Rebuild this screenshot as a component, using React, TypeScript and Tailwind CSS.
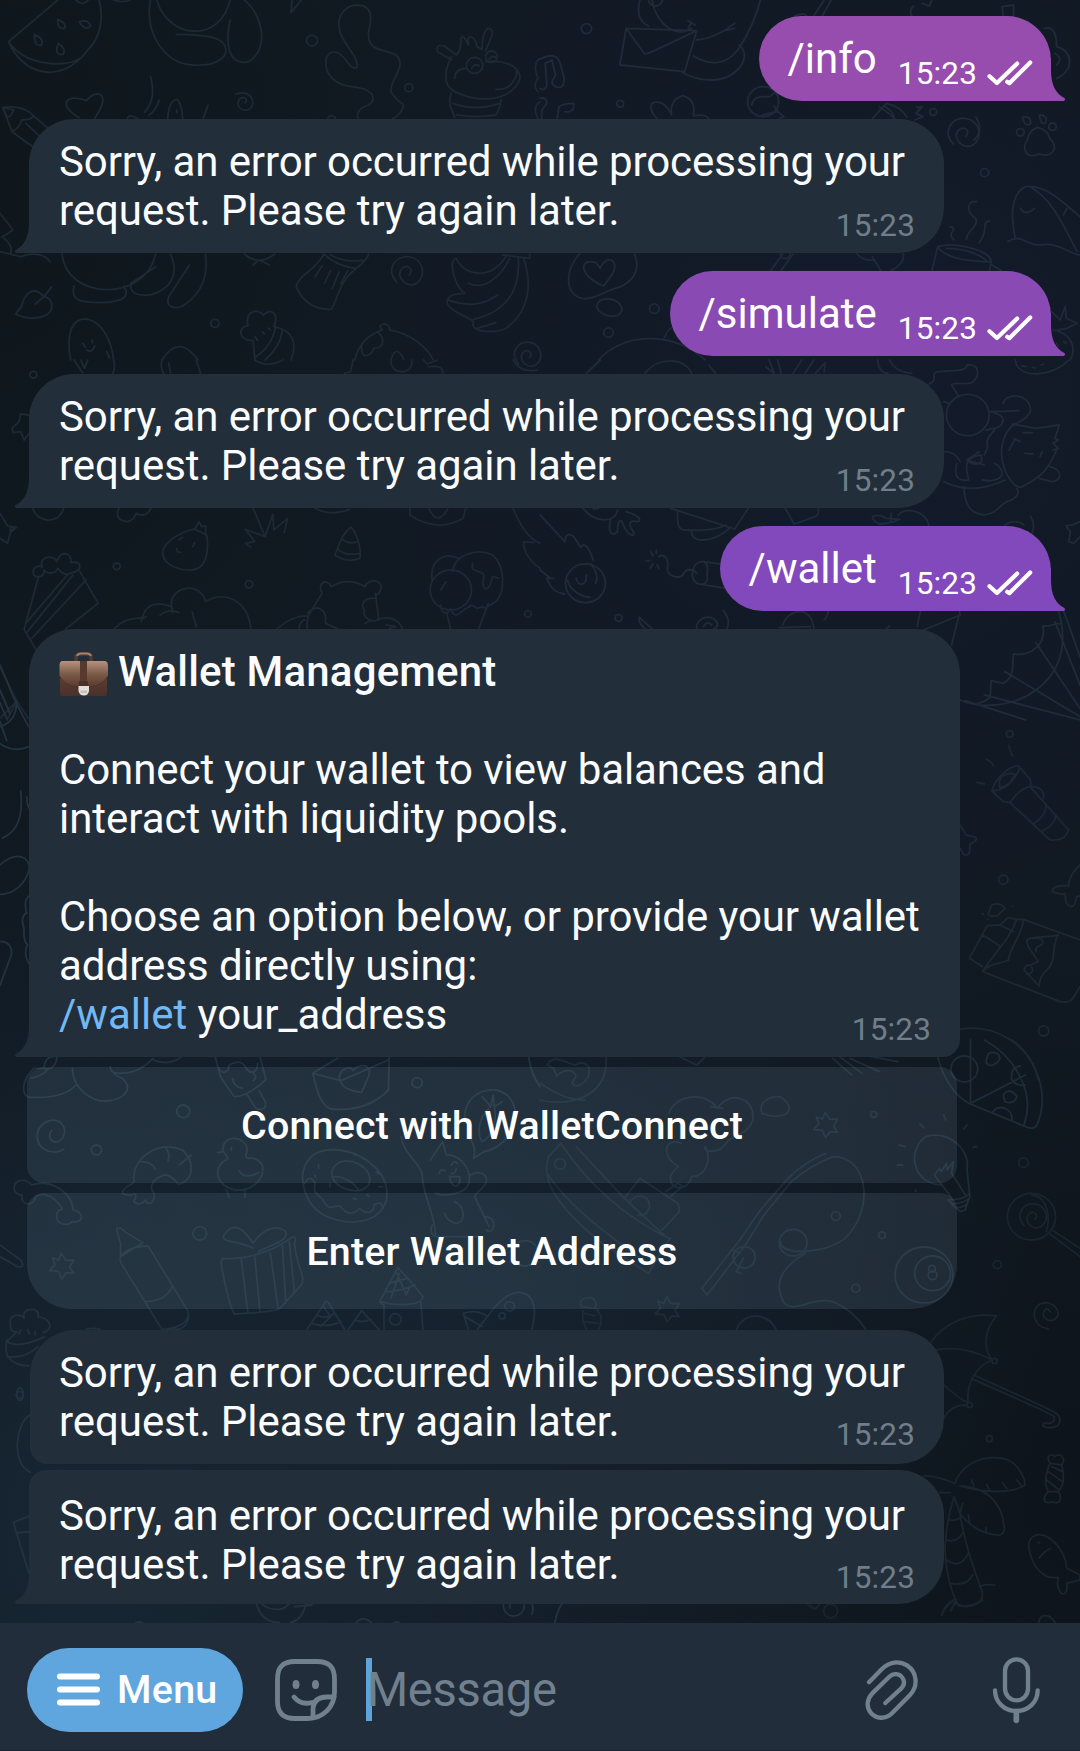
import React from "react";

type DoodleGroup = { transform: string; color: string; paths: string[] };

/** Circle as a path, so that every doodle is plain path data. */
const dot = (x: number, y: number, r = 12) =>
  `M${x - r} ${y}a${r} ${r} 0 1 0 ${2 * r} 0a${r} ${r} 0 1 0 ${-2 * r} 0`;

const spiral = (x: number, y: number, s = 1) =>
  `M${x - 28 * s} ${y + 32 * s}C${x - 62 * s} ${y - 6 * s} ${x - 32 * s} ${y - 48 * s} ${x + 6 * s} ${y - 45 * s}C${x + 48 * s} ${y - 40 * s} ${x + 62 * s} ${y + 12 * s} ${x + 28 * s} ${y + 36 * s}C${x - 2 * s} ${y + 52 * s} ${x - 34 * s} ${y + 10 * s} ${x - 12 * s} ${y - 10 * s}C${x + 4 * s} ${y - 24 * s} ${x + 24 * s} ${y - 6 * s} ${x + 8 * s} ${y + 10 * s}`;

const star = (x: number, y: number) =>
  `M${x - 2} ${y - 38}L${x + 11} ${y - 17}L${x + 34} ${y - 18}L${x + 22} ${y + 4}L${x + 34} ${y + 22}L${x + 13} ${y + 20}L${x - 1} ${y + 38}L${x - 10} ${y + 16}L${x - 36} ${y + 14}L${x - 20} ${y - 4}L${x - 28} ${y - 24}L${x - 10} ${y - 18}Z`;

const doodles: DoodleGroup[] = [
  {
    transform: "scale(.3444 .3333)",
    color: "#1d2934",
    paths: [
      "M168 0L25 125C60 215 170 265 255 150C295 110 300 50 288 0M25 125C70 195 190 210 240 170M220 0Q240 20 256 0M330 0Q355 10 378 0",
      "M168 58Q200 75 185 86Q165 86 168 58M230 66Q255 55 263 78Q250 95 230 66M100 104Q128 115 122 134Q100 145 100 104M170 130Q195 150 182 164Q155 165 170 130",
      "M437 0C420 90 470 190 560 195C640 200 660 165 655 145C650 110 590 103 512 103M455 0C490 120 640 130 668 0M668 60C640 210 720 190 730 180C785 130 755 40 710 0M845 38L875 0M845 38L848 0",
      "M1035 15C1000 18 975 50 987 95C997 130 1050 185 1035 203C1010 212 1000 145 960 158C930 180 945 250 1020 260C1080 265 1100 295 1070 315Q1030 330 1040 356M1035 15C1080 15 1082 50 1070 95C1065 160 1120 145 1150 165C1185 200 1130 240 1135 275Q1150 300 1170 312Q1175 335 1140 356",
      dot(906, 122, 16), dot(1187, 263), dot(963, 358, 11), dot(624, 970),
      "M1310 170C1270 260 1310 280 1380 295C1460 305 1500 270 1510 235C1510 195 1460 180 1410 185M1312 180L1270 155Q1265 130 1290 138L1325 165Q1340 150 1338 115Q1345 100 1360 135Q1355 100 1375 115Q1385 130 1385 140L1400 148Q1400 95 1418 85Q1438 90 1425 115L1410 152M1320 235Q1320 208 1352 205M1440 268Q1480 270 1492 240Q1505 225 1498 205M1310 280C1300 310 1310 325 1320 352M1455 300Q1450 330 1440 345M1315 310Q1380 335 1450 310M1325 345Q1380 355 1440 345",
      dot(1378, 196, 24), dot(1427, 170, 17), "M1370 205Q1378 188 1392 198M1420 178Q1428 165 1438 172",
      "M1568 175Q1545 190 1562 235Q1545 260 1562 275M1568 305Q1545 320 1562 356",
      "M230 353C160 310 200 280 250 302C280 265 320 280 285 338L275 356",
      "M8 322L35 395L95 440M8 322Q70 315 98 348L140 385M35 395Q60 380 62 360Q90 360 98 348M75 370L115 408M8 322L40 330Q30 355 20 350Z",
      "M437 230Q455 295 420 337M462 300Q455 330 432 346M487 356Q490 300 515 298Q530 320 530 356M513 330V338M604 315L590 356M370 355Q375 340 400 356",
      "M685 282C740 265 745 325 718 330C685 335 685 295 705 292Q722 295 712 308",
      "M180 760C190 900 420 910 452 762M215 858C205 900 230 908 290 908C370 905 375 885 360 858M380 850C375 880 400 890 440 884C500 865 520 820 495 762M380 850L452 800M550 795L490 890C480 920 505 930 530 918C590 880 605 820 596 762",
      "M150 860L128 890C90 850 70 890 62 920L45 942C90 965 155 955 150 915Q150 895 128 890L102 912M0 755Q40 765 60 770Q120 750 145 785M0 640L38 690L5 712M12 715Q40 740 30 760",
      "M710 762Q750 800 798 762M735 795L752 780L782 795",
      "M940 762C920 810 870 820 860 860C875 900 910 930 962 928C985 890 980 850 1035 805Q1070 775 1070 762M940 762Q980 800 1035 805M960 765Q1000 790 1060 780M935 798L915 830M960 812L942 850M985 815L965 865M1010 812L990 850",
      spiral(1180, 815),
      "M1470 768C1420 850 1340 820 1325 775C1300 780 1320 860 1350 880C1290 880 1290 910 1310 925C1340 950 1370 955 1375 965C1360 1000 1440 1000 1470 985C1540 930 1545 850 1520 775M1505 775C1510 850 1490 930 1375 958M1300 900C1370 925 1410 910 1445 885M1360 850C1400 870 1450 840 1480 775M1385 985Q1420 975 1440 968M1460 765L1538 775V762",
      "M205 1080C190 1000 210 955 250 957C300 965 325 1030 330 1080M240 1030L248 1042M268 1020V1028M252 1050Q268 1060 275 1038M310 1055L318 1075M470 1080Q520 1000 575 1080",
      "M740 1080L735 1022C690 1020 690 980 720 978C710 930 750 925 765 945C790 920 810 945 795 980C850 990 865 1030 845 1080M740 1072Q790 1040 800 980M770 1080Q815 1040 820 990M740 1010L748 1022M762 995L768 1002M780 985L784 990",
      "M1030 1080C1045 1020 1080 1000 1110 990Q1095 975 1115 972Q1135 975 1130 990C1190 1000 1240 1040 1258 1080M1050 1040C1045 1080 1080 1070 1085 1045C1120 1045 1115 1010 1098 998M1135 1080Q1150 1030 1172 1078",
      spiral(1530, 1065, 0.85),
    ],
  },
  {
    transform: "translate(540 0) scale(.3444 .3333)",
    color: "#202a3a",
    paths: [
      dot(135, 86, 15), dot(233, 311, 10), dot(1142, 336, 10), dot(1291, 518), dot(332, 926, 14), dot(199, 998, 14),
      "M250 85L455 92L420 215L232 195ZM250 85L302 160Q310 162 320 158L455 92M290 0Q275 60 315 78M325 0C340 80 400 115 440 85M430 62L450 75M438 70L430 85M455 120Q510 115 565 70M565 85L535 92M640 0C620 80 590 125 578 145C540 200 490 195 445 168M578 135C620 170 570 240 500 240Q450 240 410 215",
      dot(335, -2, 20),
      "M740 48Q770 35 775 50M795 48L825 0M820 48L845 0M1080 48Q1070 30 1085 18M1110 10L1130 18L1138 0M1345 48L1342 20L1375 15V48",
      "M1465 85Q1500 75 1500 140C1545 150 1555 210 1500 235M1495 160Q1520 175 1500 195",
      "M0 178Q50 150 60 195L70 235Q70 270 45 260Q25 250 45 228L35 180L15 190L20 255Q15 275 0 265M0 295Q20 290 20 310L5 330V356M50 356L55 320Q70 310 98 310Q100 340 72 335",
      "M340 356Q315 330 325 310Q360 295 382 345Q375 300 415 287Q455 300 445 348Q480 340 490 356",
      dot(648, 305, 45), "M615 315C620 285 650 290 668 290Q675 280 688 275M645 345L690 335L680 318M690 335L708 350L695 356",
      "M965 356L1005 310Q1050 320 1065 352M985 320Q1015 340 1030 356M1000 318Q1025 335 1028 350M1095 320Q1090 325 1110 320L1092 340L1112 350L1088 360",
      spiral(1228, 400),
      "M1265 350Q1290 390 1260 420",
      "M1445 382Q1475 390 1480 415C1510 445 1485 475 1450 462C1405 480 1400 440 1415 420Q1420 390 1445 382",
      dot(1395, 397, 11), dot(1488, 380, 11), "M1400 352Q1425 345 1425 370Q1410 385 1400 352M1450 345Q1475 345 1468 368Q1455 380 1450 345",
      "M1358 725C1400 700 1410 735 1450 735C1510 725 1540 765 1568 765M1380 715C1365 640 1370 580 1410 560C1470 550 1530 620 1568 650M1425 562C1490 600 1520 680 1560 755M1395 625Q1410 650 1435 625M1530 625L1520 645",
      "M1268 605C1235 600 1240 640 1265 655C1275 680 1240 690 1238 718M1305 663C1280 665 1305 690 1275 728M1190 680Q1208 682 1195 700Q1190 710 1202 720M1155 740C1200 725 1310 750 1310 785C1260 785 1180 780 1155 740M1155 740L1138 812M1310 785L1305 812M1180 745Q1250 745 1295 780M1312 795L1340 812",
      "M115 762C70 810 70 890 130 897C180 890 190 870 235 860C290 830 285 790 275 762M185 858C115 830 110 775 160 787Q165 790 175 805C190 760 240 780 205 830Z",
      "M165 922C165 880 240 895 238 930C230 960 175 950 165 922M705 762L670 812M735 762L700 812M920 762Q940 785 970 780M965 770L990 812M1055 762Q1060 790 1020 812",
      dot(712, 762, 14),
      "M360 1015Q370 985 395 975M170 1080C240 1000 380 990 480 1080M1485 935L1510 960L1525 920L1528 955L1560 970L1530 985L1505 990M1490 990C1540 1000 1560 1040 1540 1080M1500 1030L1505 1038M1520 1025L1528 1030",
    ],
  },
  {
    transform: "translate(0 360) scale(.3444 .3333)",
    color: "#1d2934",
    paths: [
      dot(97, 44, 10), dot(339, 619, 10), dot(723, 673, 11), dot(1533, 762, 10),
      "M215 0L240 38M235 0L245 25L255 0M330 0Q335 20 328 40M470 0Q465 25 475 40M490 10L495 38M570 0L582 40M740 0Q775 25 822 0M1025 0L1018 35L1000 40M1135 0Q1135 35 1170 35Q1200 30 1195 0M1230 0L1240 12L1270 0M1245 20Q1290 15 1285 40M1490 0Q1510 40 1560 30",
      "M85 165L60 162L55 185L35 205L38 218L60 215L70 240L85 220",
      "M95 445C110 490 170 495 185 445M345 445Q330 480 370 485Q390 480 395 460Q425 475 438 445M0 460L22 498L48 502L30 518L22 550L0 535M30 500L45 503L30 512Z",
      "M565 507C530 515 480 540 472 575C470 620 540 640 575 625C605 610 605 550 600 525L580 515L565 507L578 485L585 500L597 498V525M520 540L530 532M565 548L560 560M513 565Q512 578 525 577",
      "M735 445L770 530L792 462L795 510L835 475L825 518M770 530L712 508L740 545L712 550L728 562",
      "M915 445Q960 470 1015 448M1190 445V465Q1270 520 1345 475L1352 445M1245 445Q1270 500 1300 448",
      "M1020 502C990 520 985 560 972 585Q1005 610 1045 595C1050 560 1035 520 1020 502M992 535Q1010 555 1038 545M980 565Q1000 590 1045 580",
      "M98 645C90 620 115 615 122 622C110 585 160 585 165 605C180 560 215 590 205 608C245 600 235 635 210 638C190 650 175 635 168 625C155 650 130 635 128 630C130 650 110 655 98 645M112 650L70 808L105 870M230 632L285 730L190 808M195 645L75 790M212 645L80 815M250 660L92 835",
      "M332 806Q365 770 415 775M410 785C420 735 450 720 498 740C490 680 580 660 597 725C650 690 720 720 728 806M415 775L425 770M465 765Q490 745 520 758M558 755L570 800M500 742V758",
      "M805 806Q850 765 895 768M935 700C920 665 950 655 962 680C990 660 1030 660 1060 680C1070 650 1125 660 1100 700Q1095 708 1090 700L1100 780M935 700L895 768C890 790 892 800 892 806M892 760C920 730 950 745 945 790L980 806M868 806Q870 785 885 780M1090 715C1060 710 1045 735 1058 750C1050 775 1085 790 1095 780C1130 765 1160 780 1168 806M1060 790L1080 780M1120 795L1150 800L1130 806",
      dot(1309, 690, 60),
      "M1255 665C1245 600 1290 575 1330 595M1315 635C1320 580 1390 565 1430 585C1470 620 1465 700 1440 725C1420 735 1410 750 1400 740L1385 745L1370 735L1360 740M1280 690L1295 665M1372 610C1365 640 1400 630 1405 645C1395 700 1420 690 1425 670L1430 650L1448 655M1280 735C1280 770 1305 760 1308 745C1325 790 1340 745 1365 740M1298 762L1308 806M1418 730L1390 806",
      "M1490 445C1510 500 1540 540 1568 550M1550 548L1520 545C1520 580 1545 610 1568 625",
      "M0 920L48 1022L82 1075M0 990L30 1060M0 1075L50 1022L20 1080",
    ],
  },
  {
    transform: "translate(540 360) scale(.3444 .3333)",
    color: "#202b3a",
    paths: [
      dot(228, 774, 10), dot(132, 670, 58), dot(1242, 165, 62),
      "M135 40L175 0M305 40C340 -10 420 -10 440 40M490 15L510 40M655 20L680 40L665 0M700 40L690 0M735 40L760 0M770 40L795 0M800 40L828 8L825 35M980 0Q985 40 1010 40M1015 0Q1030 35 1080 40M1380 0Q1385 40 1440 42Q1500 38 1535 0M1400 18L1412 20M1430 22L1438 24M1455 15L1462 12",
      "M1130 72C1160 60 1130 40 1155 35C1200 30 1240 35 1240 15C1275 10 1280 45 1255 68C1220 75 1200 65 1195 75L1215 108",
      "M1172 125L1188 130M1175 275Q1205 275 1220 305M1172 365C1240 400 1300 385 1350 360M1305 155Q1350 155 1390 152M1345 130C1350 100 1420 95 1425 150C1420 175 1390 185 1372 198M1305 155Q1350 165 1345 185M1295 210L1320 205Q1345 200 1343 180M1320 210Q1290 240 1300 260L1290 285",
      "M1380 190C1340 220 1330 280 1350 330C1370 380 1395 385 1400 380C1460 350 1480 320 1500 270M1370 192L1440 205L1508 195L1495 235L1505 240L1490 250L1505 265L1490 270M1375 235L1395 245M1378 240L1362 270M1402 218H1430M1408 280L1432 282M1458 275L1452 290M1480 320C1520 330 1515 365 1485 365L1450 355M1210 310C1200 350 1215 365 1245 360C1230 310 1240 290 1280 285C1290 310 1270 320 1245 305M1275 275L1240 300L1290 315M1285 360C1350 370 1355 330 1320 310M1230 380C1235 440 1250 460 1290 465C1340 455 1330 430 1370 420Q1395 405 1385 385",
      "M0 465L72 545C75 520 85 520 98 530L118 562C130 540 145 570 155 602M0 630L30 655M40 655H20C30 685 50 700 72 702M105 655C110 680 135 680 135 645M80 660C85 690 120 710 145 712M148 612Q172 640 162 670",
      "M125 445C160 490 220 490 225 450M155 447L170 445M205 480C195 520 210 530 225 515C225 480 235 475 240 490C260 540 285 530 265 505C255 485 265 480 285 485C300 475 270 460 250 455",
      "M380 445L565 507L605 445M400 455Q395 510 420 510Q500 515 540 495M440 515C440 550 500 550 550 505M712 445L738 492L800 470Q812 460 808 445",
      "M345 590C360 580 375 595 370 625C370 655 410 655 415 645C420 625 445 625 455 640M475 605C440 600 430 660 460 672Q490 680 485 640Q490 610 475 605L540 615M460 672L540 685M322 575L328 588M338 570V580M308 602H318M320 625L328 612M340 615L345 625",
      "M325 806L288 772Q285 790 305 806M455 806C450 775 500 755 515 790Q515 806 505 806M475 800Q485 780 498 795M532 752Q555 780 543 806M695 803L785 800M705 795C720 745 790 735 795 806M825 780Q835 770 838 752",
      "M965 470Q985 460 1005 475L1045 478Q1020 490 985 492Q965 480 965 470M1020 460L1018 482M1040 465C1060 440 1120 450 1130 498M1350 495Q1380 475 1405 495M1425 470Q1440 495 1428 520M1568 485L1545 495L1528 498L1540 515L1535 545L1550 550L1568 530",
      "M1105 752L1095 800M1220 752L1195 855M1110 812L1220 765M1005 806L1015 798",
      "M1505 752C1540 870 1500 960 1410 1010C1350 1040 1270 1045 1220 1020M1520 752L1568 890M1495 785L1568 975M1440 848L1568 1045M1350 935L1568 1070M1290 1005L1568 1080M1235 1022L1410 1080M1515 790C1490 790 1485 800 1460 798C1470 850 1430 890 1375 882C1370 920 1380 950 1345 970L1310 962C1305 1000 1320 1020 1270 1030",
    ],
  },
  {
    transform: "translate(0 1040) scale(.3444 .3333)",
    color: "#20323e",
    paths: [
      dot(532, 214, 19), dot(280, 330, 15), dot(580, 580, 20), dot(1211, 128, 15), dot(1148, 838, 17), dot(57, 1065, 10), dot(1480, 799, 14), dot(1458, 828, 9),
      "M155 50Q130 50 128 85C150 95 165 70 165 50M98 85C60 125 60 170 90 172C160 175 200 160 220 135M98 85L128 85M90 115Q130 105 140 85M210 85C210 140 260 185 310 183C370 178 385 140 355 115C330 105 320 90 320 80M330 98C380 105 410 90 445 55M445 60C480 75 510 65 528 50",
      "M625 50L640 110L680 170Q720 170 772 118L755 50M632 78C645 110 665 95 665 75C685 65 700 60 712 80C730 110 748 95 748 70M675 115C675 130 690 145 705 145M735 100Q750 110 735 122M718 165L740 200M752 152L770 185Q775 205 760 208Q745 210 740 200",
      "M908 100L980 55M908 100C920 150 930 195 960 207C1040 215 1090 190 1128 150L1130 50M908 100L990 122L1128 60M1050 157C980 150 970 100 1005 85Q1020 80 1025 92C1040 70 1080 70 1072 105Z",
      "M185 328C160 345 110 335 108 290C108 250 150 230 175 247C200 270 185 310 155 305Q135 290 150 272",
      "M355 460C360 430 395 440 388 415C390 350 460 300 530 330C570 370 560 420 520 433C510 430 505 405 478 405C445 415 430 440 447 460C450 490 430 500 422 480Q410 500 388 485Q400 465 390 462Q375 470 355 460M410 365Q440 365 452 388M480 322Q495 340 488 362M520 375L555 345",
      "M632 338L648 335C640 280 715 285 718 330C715 345 710 350 720 355M650 335C655 350 665 352 660 358C625 370 615 430 680 450C730 455 770 420 762 375Q745 350 720 355M695 393Q710 420 752 398M658 450L665 472M710 450L712 472M672 322V330",
      "M900 355C860 400 880 490 940 525C1010 560 1100 555 1122 480C1135 400 1060 340 985 330C940 325 910 340 900 355M963 400C970 350 1040 350 1070 400C1085 440 1050 460 1015 450C980 440 965 425 963 400M970 410C1000 410 1030 430 1040 450M885 430Q900 400 915 430C905 470 935 465 940 485C960 520 975 490 990 500C1010 530 1030 520 1045 505C1070 530 1090 510 1085 495Q1110 480 1112 505M925 375V385M1030 340V345M915 405V412M1092 395L1100 402M1100 440H1110M1025 475L1035 478M958 430V440M1065 465L1072 468",
      "M1350 240C1345 180 1390 145 1440 150C1500 165 1510 230 1480 280C1455 320 1430 330 1405 335L1375 355Q1385 320 1360 290M1400 170L1425 200L1432 165L1435 200L1458 185M1425 200C1380 240 1390 290 1400 305C1430 290 1445 240 1435 200",
      "M1165 290C1170 340 1220 370 1225 400C1230 480 1260 510 1265 585M1250 360L1285 305C1295 330 1290 350 1305 345C1340 350 1370 390 1362 430C1350 465 1290 470 1265 460M1365 405C1400 385 1430 410 1400 445Q1385 455 1378 470L1420 560M1305 410C1310 450 1340 445 1335 410ZM1275 400Q1278 385 1292 392M1310 375Q1318 360 1328 370M1310 400Q1322 405 1325 385M1320 485C1350 500 1355 545 1325 550Q1300 545 1290 520M1405 530Q1440 530 1432 565Q1425 580 1412 570M1255 555Q1245 580 1265 590H1400",
      "M42 452C35 415 75 415 92 435C150 415 210 460 212 510C245 515 245 550 210 545C195 560 160 555 165 520C175 500 180 515 180 505C150 455 110 455 100 478C95 500 55 495 65 465Q50 465 42 452",
      star(180, 678),
      "M340 565Q350 560 362 575L415 608L350 650V610L340 575ZM350 650Q370 620 430 618L545 812C555 850 530 870 510 868H470L358 680Q345 665 350 650M420 785Q480 785 500 740M480 868Q540 860 548 825",
      "M735 625C690 600 640 610 650 585C680 540 710 570 735 610C760 570 800 550 830 575C840 605 780 615 750 635M645 655C700 660 790 640 850 590Q862 590 855 610C860 680 890 710 875 735L810 808C760 820 710 820 680 822C660 780 650 720 642 670ZM700 655L720 820M740 650L755 818M785 640L808 808M820 618L830 790M840 605L855 760",
      "M892 868L945 785Q950 782 955 790L1000 868M920 825Q945 840 972 820M905 850Q950 865 990 845M940 800L960 830L930 860M1012 868L1050 812L1100 868M1030 840Q1055 850 1078 838M1115 868V795Q1100 790 1105 780L1155 683Q1190 720 1228 770Q1225 785 1205 790Q1150 800 1105 785M1222 788L1228 868M1130 730Q1155 720 1185 715M1118 755Q1160 755 1205 735M1150 695L1180 765L1190 740M1160 700L1135 775",
      "M1345 820C1370 810 1400 815 1415 830L1385 870M1345 820L1360 868M1350 830L1400 860M1415 830C1450 780 1480 755 1510 757C1560 765 1555 820 1545 868",
      "M30 852C25 820 65 820 70 835C60 800 120 800 110 830C150 835 155 870 125 878M30 852Q30 880 50 875M20 900C10 950 30 975 85 978M20 905C50 925 100 905 130 890M20 950C60 955 90 940 110 920M50 875L20 905M60 870L55 882M80 870L85 882M102 875V885M0 615L60 660Q75 685 50 680L0 650M250 868Q270 862 290 868",
      dot(1525, 640, 38),
      "M1535 50Q1540 100 1568 140",
    ],
  },
  {
    transform: "translate(540 1040) scale(.3444 .3333)",
    color: "#1d2c38",
    paths: [
      dot(1232, 87, 39), dot(969, 223, 9), dot(859, 528, 13), dot(993, 586, 10), dot(917, 745, 12), dot(593, 652, 32), dot(58, 372, 16), dot(735, 608, 40),
      "M20 75Q35 50 60 60L100 75C130 60 150 75 140 110C120 145 100 140 92 130C105 110 110 105 95 95Q70 85 48 108L40 85ZM0 180C70 200 200 180 192 50M0 130C60 170 90 180 130 180M405 50L455 75L480 50M850 55L905 105M870 50Q910 80 935 100M900 55L985 95M960 50L1040 65",
      "M375 220C390 165 480 150 515 205C550 150 625 170 618 240C600 290 570 275 540 310C520 345 470 335 480 320C500 360 480 410 440 410C430 460 370 450 380 405C395 380 405 380 400 378C350 350 360 290 410 310M495 200L530 205M645 220C630 180 680 165 700 172C740 200 720 225 705 225Q680 235 645 220",
      star(830, 255), star(370, 808),
      "M25 350C0 420 50 500 180 610L315 700L370 605L380 595M60 310C130 420 240 530 375 595M20 400C90 510 220 600 310 670M25 350L60 310M105 320L245 475L290 415L400 490Q410 510 400 520L355 570M245 475L360 585M260 490C270 460 320 460 318 500Q310 530 285 525M365 455L400 430L415 440L380 468",
      "M470 745L580 600L640 510L720 415Q770 365 830 340M485 765L600 610L650 525L730 425Q780 380 850 350C960 350 970 520 880 600C820 640 700 650 698 605M470 745L485 765M770 640C690 690 680 740 710 790C740 820 790 770 850 785Q910 810 945 868M580 640L560 630M590 655L570 695L585 700M570 870C590 815 660 815 685 868",
      dot(1115, 705, 84), dot(1140, 700, 52), dot(1138, 686, 10), dot(1140, 706, 13),
      "M120 800Q110 775 145 772Q170 780 160 805Q190 830 170 868M125 812Q120 840 135 868M130 820L160 828M125 845L170 850M170 808L120 800",
      "M1155 50C1170 120 1210 170 1245 190L1415 262Q1440 270 1445 250C1480 160 1440 50 1370 0M1250 0V190L1410 105M1290 0C1380 50 1440 160 1405 255M1300 45Q1310 30 1330 42Q1345 60 1315 75Q1300 80 1295 65ZM1345 165Q1365 140 1385 170Q1375 195 1350 185ZM1315 215C1330 190 1375 205 1370 240M1395 78Q1365 80 1370 120Q1385 140 1408 135",
      "M1165 435C1080 430 1065 330 1120 290C1190 270 1250 330 1240 390L1248 470Q1240 490 1235 510L1220 515L1185 480M1145 405L1160 385L1165 395L1180 370L1182 390L1200 365L1195 400L1235 465M1145 405L1200 480M1185 480Q1230 480 1248 460M1195 492Q1230 490 1246 475M1205 503Q1225 505 1242 490M1103 253L1115 263M1172 225L1178 240M1240 255L1230 267M1042 315L1060 320M1038 375H1052M1258 322L1268 320M1090 455L1092 450",
    ],
  },
  {
    transform: "translate(540 1040) scale(.3444 .3333)",
    color: "#1a242d",
    paths: [
      dot(1404, 368, 14), dot(1328, 674), dot(1427, 530, 70), spiral(1430, 530, 0.85),
      "M1427 465C1480 470 1480 545 1470 575M1490 572L1568 625M1478 580L1568 650",
    ],
  },
  {
    transform: "translate(900 640) scale(.3333)",
    color: "#1d2835",
    paths: [
      dot(329, 282, 10), dot(310, 719, 14), dot(431, 1173, 15),
      "M326 316L337 348M260 358Q275 365 280 376M229 427L253 432M276 453C285 415 325 380 355 377L390 418Q395 430 390 440C365 445 345 465 330 488L310 485L276 453M300 443C290 410 320 395 345 403C330 430 320 440 300 443M330 488L450 600Q495 605 506 570L390 440M395 440C425 440 435 460 430 475M403 550Q440 525 438 492M427 573Q465 555 468 525M276 453C320 450 345 420 360 382",
      "M180 555L198 585L228 592Q235 602 210 612L208 640Q200 650 190 642L180 625M540 675Q510 700 505 738C480 735 455 740 457 755Q480 765 495 760C495 800 515 810 525 790L530 770L540 768",
      "M275 795Q300 785 315 805L295 825Q270 835 265 822ZM262 857L208 955L248 980M262 857L300 855L325 832L350 838M248 885L300 918M300 855L340 875M350 838C330 900 280 940 248 995C270 965 300 975 325 960C330 920 370 880 370 838L540 900M370 838H350M248 995L480 1085Q505 1090 515 1080L540 1040M380 900C400 885 440 895 475 885C450 920 475 960 440 990C420 1010 420 1020 417 1038L372 990Q375 975 392 975L415 965L385 920ZM398 895C435 890 430 910 425 915Q405 920 408 935M395 980Q405 1000 380 1003M247 822H250M337 798H338M262 838H264",
      "M180 1168C280 1150 390 1210 415 1320",
    ],
  },
  {
    transform: "translate(900 1300) scale(.3333)",
    color: "#1a252e",
    paths: [
      dot(284, 183, 8), dot(209, 315, 8), dot(268, 416, 9),
      "M445 87C400 80 390 30 420 12C460 -5 490 40 465 58C440 70 420 45 435 30Q445 22 450 35",
      "M92 128C130 70 210 35 290 48C250 90 250 150 277 180C220 150 160 140 110 150M277 180C220 200 200 260 204 308C180 300 150 270 132 255M132 355Q150 315 200 315M220 238L415 325L460 348Q468 365 450 370Q430 365 428 378Q455 390 475 375Q490 350 460 335L420 315L222 225",
      "M165 550C190 470 310 450 350 500Q375 530 375 555C340 580 250 580 180 558M70 528C110 525 150 545 165 550M118 578H150M180 558C250 560 310 600 313 690Q305 710 290 705C240 700 200 670 180 640M215 540L222 558M260 553L268 570M308 548L320 565M350 540L365 558M188 610L180 640M205 645L208 665M258 682V698M162 590L180 640C190 710 210 780 245 870Q260 920 175 918C140 850 135 770 135 740Q140 660 162 590M145 660Q170 665 185 650M138 720Q170 730 188 700M140 780Q180 810 205 760M150 850Q200 860 218 825M238 860Q260 850 285 856M165 898Q135 910 125 945M168 900L152 932",
      "M450 490C435 465 455 460 465 470C480 455 500 475 485 495C495 530 490 560 475 575C490 600 475 615 460 605C430 615 425 595 445 575C430 550 440 510 450 490L485 495M445 575H475M455 500L488 515M445 515L488 545M440 540L478 570",
      "M390 760C375 710 410 695 440 710C480 730 500 780 500 805L540 825V840L500 850C505 880 490 890 480 875C465 850 475 840 475 832C430 840 400 800 390 760M417 775Q430 755 452 745M415 728H420M418 968C415 940 450 940 465 968",
    ],
  },
  {
    transform: "translate(0 640) scale(.3333 .628)",
    color: "#22333f",
    paths: [
      "M0 40L48 100L86 138M0 80L30 118M0 138Q50 130 50 98M0 100L20 125M0 165Q40 180 86 170M0 130L20 160M62 240Q75 300 8 315M80 250Q82 265 88 268M0 358C50 335 90 345 88 365C75 390 40 405 0 405M86 408Q70 415 80 435Q60 440 72 460Q70 480 82 485Q70 500 86 515M0 480Q35 480 35 500L0 550M88 1235C50 1245 30 1310 90 1325M88 1395L40 1405L86 1485M48 1422L88 1420",
      dot(60, 1201, 10),
    ],
  },
  {
    transform: "translate(0 1600) scale(.3827 .3333)",
    color: "#223440",
    paths: [
      "M670 12C680 50 700 68 730 68M685 12Q700 30 730 28Q745 25 755 12M800 12C790 50 780 60 760 68M770 20L815 15M930 68Q950 45 970 68M1028 70L1035 65L1045 70M1315 12C1315 60 1370 60 1370 15M1332 12V25M1390 12Q1395 30 1390 42M1450 68Q1455 35 1468 12",
      "M355 68Q365 64 372 68",
    ],
  },
  {
    transform: "translate(800 1600) scale(.3333)",
    color: "#19242d",
    paths: [dot(92, 33, 21), "M22 12Q45 40 58 12M30 12L45 28M425 45Q440 10 470 0M452 32Q460 15 470 8Q500 35 548 0M715 68C720 40 750 40 765 68"],
  },
];

function Wallpaper() {
  return (
    <svg
      className="pointer-events-none absolute inset-0"
      width="1080"
      height="1751"
      viewBox="0 0 1080 1751"
      fill="none"
      strokeWidth="1.8"
      strokeLinecap="round"
      strokeLinejoin="round"
      aria-hidden="true"
    >
      {doodles.map((g, i) => (
        <g key={i} transform={g.transform} stroke={g.color}>
          {g.paths.map((d, j) => (
            <path key={j} d={d} vectorEffect="non-scaling-stroke" />
          ))}
        </g>
      ))}
    </svg>
  );
}

function Tail({ side, className }: { side: "left" | "right"; className: string }) {
  return (
    <svg
      className={`absolute bottom-0 ${side === "left" ? "-left-[14px]" : "-right-[14px] -scale-x-100"} ${className}`}
      width="16"
      height="45"
      viewBox="0 0 16 45"
      fill="currentColor"
    >
      <path d="M14 2H16V45H1Q-.8 43.500 .6 42C9 38 14 29 14 14Z" />
    </svg>
  );
}

function Checks() {
  return (
    <svg width="46" height="26" viewBox="0 0 46 26" fill="none" stroke="currentColor" strokeWidth="4.200" strokeLinecap="round" strokeLinejoin="round">
      <path d="M2.500 16.200L9.900 23L30.200 3.600M20.200 21.800L22.400 23.200L43.200 2.500" />
    </svg>
  );
}

function Outgoing({ text, bubble, tail }: { text: string; bubble: string; tail: string }) {
  return (
    <div className={`relative flex h-[85px] items-start self-end rounded-l-[43px] rounded-tr-[45px] pt-[18px] pr-[18px] pl-[29px] text-white ${bubble}`}>
      <span>{text}</span>
      <span className="mt-[21px] ml-[21px] text-[31.5px] leading-[37px] tracking-[0.15px]">15:23</span>
      <span className="mt-[26px] ml-[10px]">
        <Checks />
      </span>
      <Tail side="right" className={tail} />
    </div>
  );
}

type IncomingProps = {
  children: React.ReactNode;
  className: string;
  tail?: boolean;
  timeOffset?: string;
};

function Incoming({ children, className, tail = true, timeOffset = "-mb-[9px]" }: IncomingProps) {
  return (
    <div className={`relative grid bg-[#222e39] pr-[29px] text-[#fafcff] ${className}`}>
      <div className="whitespace-nowrap [grid-area:1/1]">{children}</div>
      <span className={`self-end justify-self-end text-[31.5px] leading-[37px] tracking-[0.15px] text-[#707e8b] [grid-area:1/1] ${timeOffset}`}>15:23</span>
      {tail && <Tail side="left" className="text-[#222e39]" />}
    </div>
  );
}

function ErrorText() {
  return (
    <p>
      <span className="tracking-[-0.09px]">Sorry, an error occurred while processing your</span>
      <br />
      <span className="tracking-[-0.05px]">request. Please try again later.</span>
    </p>
  );
}

function Briefcase() {
  return (
    <svg className="mt-[6px] mr-[10px] shrink-0" width="49" height="45" viewBox="0 0 49 45">
      <defs>
        <linearGradient id="leather" x1="0" y1="0" x2="0" y2="1">
          <stop offset="0" stopColor="#b5937e" />
          <stop offset=".5" stopColor="#7c5a48" />
          <stop offset="1" stopColor="#573a2e" />
        </linearGradient>
        <linearGradient id="base" x1="0" y1="0" x2="0" y2="1">
          <stop offset="0" stopColor="#6c4a3a" />
          <stop offset="1" stopColor="#49302a" />
        </linearGradient>
      </defs>
      <path d="M17 9V5Q17 2 21 2H28Q32 2 32 5V9" fill="none" stroke="#513a31" strokeWidth="3.500" />
      <path d="M18 4Q19 1.500 22 1.500H28Q31 1.500 32 4" fill="none" stroke="#a5826c" strokeWidth="2" />
      <rect x="1" y="10" width="47" height="34" rx="2" fill="url(#base)" />
      <path d="M2.500 9H46.500Q49 10 49 13V24C44 32 37 35 29 35H20C12 35 5 32 .5 24V13Q.5 10 2.500 9Z" fill="url(#leather)" />
      <path d="M.5 24C5 32 12 35 20 35H29C37 35 44 32 49 24" fill="none" stroke="#4b3126" strokeWidth="1" />
      <path d="M21 9H28V29H21Z" fill="#573a2d" />
      <path d="M20 29H29V34H20Z" fill="#4a3026" />
      <path d="M19.500 34H30V39Q29 43.500 25 43.500Q20.500 43.500 19.500 39Z" fill="#e2deda" />
      <path d="M21.500 38.500H28V41H21.500Z" fill="#c5bfba" />
    </svg>
  );
}

function InputBar() {
  return (
    <footer className="flex h-[128px] items-center border-b border-[#1a2632] bg-[#212d3a] pt-[6px] pr-[39px] pl-[27px] text-[#71808e]">
      <button className="flex h-[84px] w-[216px] shrink-0 items-center rounded-full bg-[#5fa6de] pl-[30px] text-white">
        <svg width="43" height="33" viewBox="0 0 43 33" stroke="currentColor" strokeWidth="6" strokeLinecap="round">
          <path d="M3 3.500H40M3 16.500H40M3 29.500H40" />
        </svg>
        <span className="ml-[17px] pt-px text-[39.4px] leading-[46px] font-medium tracking-[0.3px]">Menu</span>
      </button>
      <svg className="ml-[32px] shrink-0" width="62" height="62" viewBox="0 0 62 62" fill="none" stroke="currentColor" strokeWidth="4.800" strokeLinecap="round" strokeLinejoin="round">
        <path d="M2.500 20C2.500 8 8 2.500 20 2.500H42C54 2.500 59.500 8 59.500 20V33C59.500 48 48 59.500 33 59.500H20C8 59.500 2.500 54 2.500 42Z" />
        <path d="M59 38H52C42 38 38 43 38 51V58M19 38Q26 46.500 37 43.500" />
        <ellipse cx="21" cy="25.500" rx="3.500" ry="4.500" fill="currentColor" stroke="none" />
        <ellipse cx="40.500" cy="25.500" rx="3.500" ry="4.500" fill="currentColor" stroke="none" />
      </svg>
      <span className="ml-[29px] h-[63px] w-[6px] bg-[#5fa3db]" />
      <span className="-ml-[5px] flex-1 text-[47.2px] leading-[56px] tracking-[-0.35px]">Message</span>
      <svg width="54" height="61.300" viewBox="196 178 162 184" fill="none" stroke="currentColor" strokeWidth="13" strokeLinecap="round" strokeLinejoin="round">
        <path d="M208 248L246 209C268 186 298 182 322 197C352 217 357 258 331 286L277 341C258 360 228 358 213 339C199 321 202 298 217 282L268 232C282 219 300 222 308 234C316 246 313 258 304 267L257 310" />
      </svg>
      <svg className="ml-[73px]" width="48.700" height="68" viewBox="578 168 146 204" fill="none" stroke="currentColor" strokeWidth="13" strokeLinecap="round">
        <rect x="617" y="178" width="69" height="123" rx="34.500" />
        <path d="M587 271C587 307 615 333 651 333S715 307 715 271" />
        <path d="M651 335V361" strokeWidth="17" />
      </svg>
    </footer>
  );
}

export default function App() {
  return (
    <div className="relative flex h-[1751px] w-[1080px] flex-col overflow-hidden bg-[#111922] bg-[radial-gradient(ellipse_620px_700px_at_8%_88%,#172633,transparent),radial-gradient(ellipse_560px_480px_at_45%_74%,#15212d,transparent),radial-gradient(ellipse_600px_640px_at_80%_22%,#131a2a,transparent),radial-gradient(ellipse_500px_800px_at_0%_10%,#0f171d,transparent),radial-gradient(ellipse_400px_600px_at_100%_85%,#0d141b,transparent)] font-['Roboto',sans-serif] text-[42px] leading-[49px]">
      <Wallpaper />
      <main className="relative flex h-[1623px] flex-col pt-[16px] pr-[29px] pl-[29px]">
        <Outgoing text="/info" bubble="bg-[#964dad]" tail="text-[#964dad]" />
        <Incoming className="mt-[18px] w-[915px] rounded-t-[45px] rounded-br-[45px] py-[18px] pl-[30px]">
          <ErrorText />
        </Incoming>
        <Outgoing text="/simulate" bubble="mt-[18px] bg-[#8a4ab3]" tail="text-[#8a4ab3]" />
        <Incoming className="mt-[18px] w-[915px] rounded-t-[45px] rounded-br-[45px] py-[18px] pl-[30px]">
          <ErrorText />
        </Incoming>
        <Outgoing text="/wallet" bubble="mt-[18px] bg-[#8249bc]" tail="text-[#8249bc]" />
        <Incoming className="mt-[18px] w-[931px] rounded-t-[45px] rounded-br-[17px] py-[18px] pl-[30px]">
          <h2 className="flex h-[49px] items-center font-medium tracking-[0.18px]">
            <Briefcase />
            <span>Wallet Management</span>
          </h2>
          <br />
          <p>
            <span className="tracking-[-0.09px]">Connect your wallet to view balances and</span>
            <br />
            <span className="tracking-[-0.03px]">interact with liquidity pools.</span>
          </p>
          <br />
          <p>
            <span className="tracking-[-0.09px]">Choose an option below, or provide your wallet</span>
            <br />
            address directly using:
            <br />
            <span className="text-[#71b8f5]">/wallet</span> your_address
          </p>
        </Incoming>
        <div className="mt-[10px] -ml-[2px] flex w-[930px] flex-col gap-[10px] text-[39.4px] font-medium tracking-[0.2px] text-white">
          <button className="h-[116px] rounded-[17px] bg-[#a8c8e6]/11">Connect with WalletConnect</button>
          <button className="h-[116px] rounded-t-[17px] rounded-b-[45px] bg-[#a8c8e6]/11">Enter Wallet Address</button>
        </div>
        <Incoming
          tail={false}
          timeOffset="-mb-[7px]"
          className="mt-[21px] ml-px w-[914px] rounded-t-[45px] rounded-br-[45px] rounded-bl-[17px] py-[18px] pl-[29px]"
        >
          <ErrorText />
        </Incoming>
        <Incoming timeOffset="-mb-[7px]" className="mt-[6px] w-[915px] rounded-tl-[17px] rounded-r-[45px] pt-[21px] pb-[15px] pl-[30px]">
          <ErrorText />
        </Incoming>
      </main>
      <div className="relative">
        <InputBar />
      </div>
    </div>
  );
}
